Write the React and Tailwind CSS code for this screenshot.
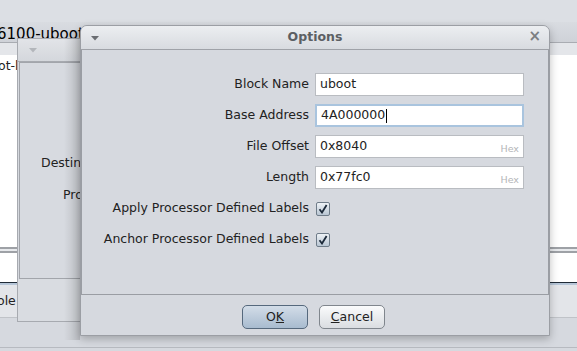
import React from 'react';

const font = { fontFamily: '"DejaVu Sans", "Liberation Sans", sans-serif' };

const Field = ({ value, hex, focused }) => (
  <div
    className={`relative h-[23px] bg-white flex items-center pl-[4px] text-[12.5px] text-[#222] ${
      focused ? 'border-2 border-[#a9c4de]' : 'border border-[#b9bcc1]'
    }`}
  >
    <span>{value}</span>
    {focused && <span className="w-px h-[14px] bg-black ml-px" />}
    {hex && (
      <span className="absolute right-[4px] bottom-[1px] text-[9.5px] text-[#b3b5b8]">Hex</span>
    )}
  </div>
);

const Check = () => (
  <div className="w-[14px] h-[14px] rounded-[2px] border border-[#6f7c89] bg-gradient-to-b from-[#eef2f6] to-[#b9c6d3] flex items-center justify-center">
    <svg width="10" height="10" viewBox="0 0 10 10">
      <path d="M1.5 5.2 L4 8.5 L8.6 1" fill="none" stroke="#1d2a3a" strokeWidth="1.8" />
    </svg>
  </div>
);

const Label = ({ children }) => (
  <div className="h-[23px] flex items-center justify-end text-[12.5px] text-[#222] whitespace-nowrap">
    {children}
  </div>
);

const Triangle = ({ color }) => (
  <svg width="8" height="5" viewBox="0 0 8 5">
    <path d="M0 0 L8 0 L4 4.5 Z" fill={color} />
  </svg>
);

export default function App() {
  return (
    <div className="relative w-[577px] h-[351px] overflow-hidden bg-[#d6d9df]" style={font}>
      {/* desktop top strip */}
      <div className="absolute left-0 top-0 w-full h-[22px] bg-[#dcdfe4]" />

      {/* background main window */}
      <div className="absolute left-0 top-[22px] w-full h-[326px] bg-[#d6d9df] border-b border-[#b7bac0]">
        <div className="h-[21px] bg-gradient-to-b from-[#d9dce1] to-[#cfd2d8] border-b border-[#a9acb2] overflow-hidden">
          <span className="block ml-[-3px] mt-[1px] text-[15px] text-black whitespace-nowrap">
            6100-uboot.bin
          </span>
        </div>
        <div className="h-[12px] bg-[#e4e6ea]" />
        <div className="h-[192px] bg-white text-[12.5px] text-[#222] overflow-hidden">
          <span className="block ml-[-2px] mt-[2px] whitespace-nowrap">ot-l</span>
        </div>
        <div className="h-[2px] bg-[#9ea1a6]" />
        <div className="h-[2px] bg-[#e7e9ec]" />
        <div className="h-[2px] bg-[#9ea1a6]" />
        <div className="h-[29px] bg-white" />
        <div className="h-[1px] bg-[#1f2a36]" />
        <div className="h-[2px] bg-[#b6c6d8]" />
        <div className="h-[33px] bg-[#e3e5e9] text-[12.5px] text-[#222] overflow-hidden border-b border-[#c0c3c8]">
          <span className="block ml-[-3px] mt-[7px] whitespace-nowrap">ole</span>
        </div>
      </div>

      {/* middle dialog (behind) */}
      <div className="absolute left-[17px] top-[38px] w-[230px] h-[284px] bg-[#d6d9df] border border-[#a7aab0] flex flex-col">
        <div className="h-[23px] flex items-center pl-[11px] bg-gradient-to-b from-[#e2e4e8] to-[#d4d7dc] border-b border-[#a7aab0]">
          <Triangle color="#b3b6bb" />
        </div>
        <div className="relative h-[217px] mx-[1px] border border-[#a2a5ab] bg-[#d7dae0] text-[12.5px] text-[#222]">
          <span className="absolute left-[21px] top-[91px] whitespace-nowrap">Destination</span>
          <span className="absolute left-[43px] top-[123px] whitespace-nowrap">Processor</span>
        </div>
        <div className="flex-1 bg-[#d9dce1]" />
      </div>

      {/* shadow strip cast by Options dialog on the middle dialog */}
      <div className="absolute left-[64px] top-[30px] w-[16px] h-[310px] bg-gradient-to-r from-transparent to-[#00000024]" />

      {/* Options dialog */}
      <div className="absolute left-[80px] top-[25px] w-[470px] h-[311px] flex flex-col rounded-t-[7px] border border-[#9b9ea4] bg-[#d6d9df] shadow-[0_3px_8px_rgba(0,0,0,0.25)] overflow-hidden">
        <div className="relative h-[24px] shrink-0 flex items-center bg-gradient-to-b from-[#eceef1] to-[#d8dbe0] border-b border-[#9fa2a8]">
          <div className="absolute left-[10px] top-[10px]">
            <Triangle color="#6a6d72" />
          </div>
          <div className="flex-1 text-center text-[12.5px] font-bold text-[#5c5f63]">Options</div>
          <div className="absolute right-[8px] top-[3px] text-[15px] font-bold text-[#7b7e82] leading-none">×</div>
        </div>

        <div className="h-[245px] shrink-0 border border-[#9a9da3] border-t-0 bg-[#d6d9df] pt-[23px]">
          <div className="grid grid-cols-[227px_209px] gap-x-[6px] gap-y-[8px]">
            <Label>Block Name</Label>
            <Field value="uboot" />
            <Label>Base Address</Label>
            <Field value="4A000000" focused />
            <Label>File Offset</Label>
            <Field value="0x8040" hex />
            <Label>Length</Label>
            <Field value="0x77fc0" hex />
            <Label>Apply Processor Defined Labels</Label>
            <div className="h-[23px] flex items-center pl-px"><Check /></div>
            <Label>Anchor Processor Defined Labels</Label>
            <div className="h-[23px] flex items-center pl-px"><Check /></div>
          </div>
        </div>

        <div className="flex-1 flex items-start justify-center gap-[11px] pt-[10px] pr-[3px] text-[12.5px] text-[#222]">
          <button className="w-[66px] h-[24px] rounded-[5px] border border-[#56697d] bg-gradient-to-b from-[#d3dde8] to-[#a8bbcf] flex items-center justify-center">
            <span>O<span className="underline">K</span></span>
          </button>
          <button className="w-[66px] h-[24px] rounded-[5px] border border-[#80868d] bg-gradient-to-b from-[#fafbfc] to-[#dadde1] flex items-center justify-center">
            <span><span className="underline">C</span>ancel</span>
          </button>
        </div>
      </div>
    </div>
  );
}
